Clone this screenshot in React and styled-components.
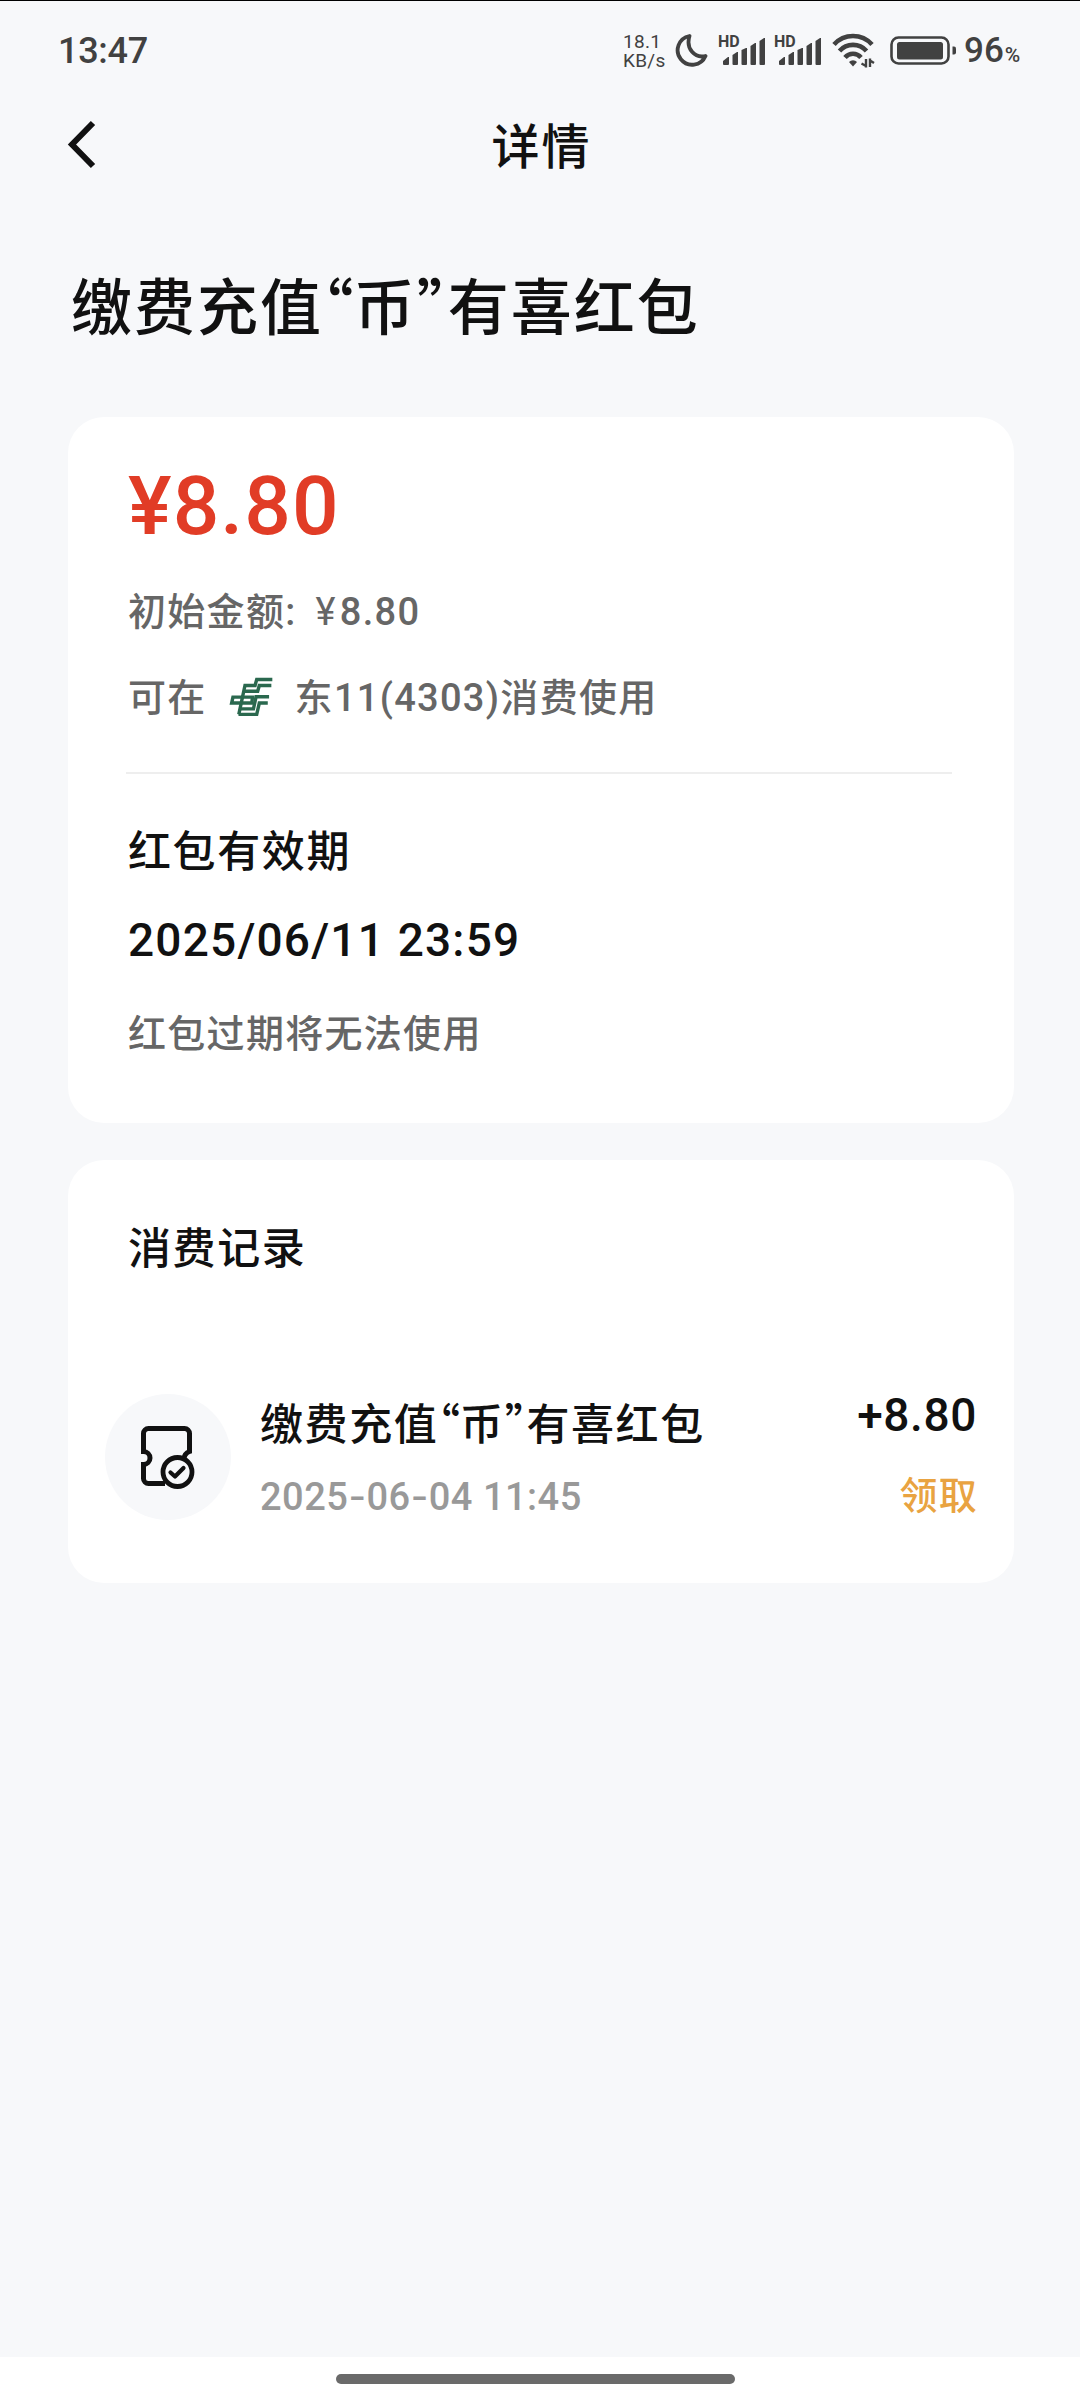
import styled, { createGlobalStyle } from "styled-components";

const GlobalStyle = createGlobalStyle`
    * {
        box-sizing: border-box;
    }
    body {
        margin: 0;
        background-color: #f7f8fa;
    }
`;

const Page = styled.div`
    display: flex;
    flex-direction: column;
    width: 1080px;
    height: 2400px;
    overflow: hidden;
    border-top: 1px solid #000;
    background-color: #f7f8fa;
    color: #111;
    font-family: Roboto, "Noto Sans CJK SC", sans-serif;
    font-weight: 500;
    white-space: nowrap;
`;

const StatusBar = styled.div`
    display: flex;
    align-items: center;
    justify-content: space-between;
    height: 100px;
    padding: 0 58px 0 58px;
    color: #414141;
`;

const Clock = styled.div`
    font-size: 36px;
    line-height: 40px;
    letter-spacing: -0.3px;
`;

const StatusIcons = styled.div`
    display: flex;
    align-items: center;
`;

const Speed = styled.div`
    display: flex;
    flex-direction: column;
    width: 51px;
    font-size: 19px;
    font-weight: 400;
    line-height: 19px;
    letter-spacing: 0.3px;
`;

const Percent = styled.div`
    display: flex;
    align-items: baseline;
    margin: 3px 0 0 7px;
    width: 58px;
    font-size: 35px;
    line-height: 40px;
`;

const Small = styled.span`
    margin-left: 1px;
    font-size: 21px;
`;

const NavBar = styled.div`
    display: grid;
    grid-template-columns: 100px 1fr 100px;
    align-items: center;
    height: 90px;
`;

const BackIcon = styled.svg`
    width: 32px;
    height: 50px;
    margin: -4px 0 0 66px;
`;

const NavTitle = styled.div`
    padding: 4px 0 0 3px;
    font-size: 48px;
    line-height: 60px;
    letter-spacing: 2px;
    text-align: center;
`;

const Heading = styled.h1`
    margin: 78px 0 0 71px;
    height: 78px;
    font-size: 61px;
    font-weight: 500;
    line-height: 80px;
    letter-spacing: 2px;
`;

const Quote = styled.span`
    display: inline-block;
    width: 0.505em;
    font-family: "Noto Sans CJK SC", sans-serif;
    font-feature-settings: "halt";
    line-height: 1;
    letter-spacing: 0;
`;

const Card = styled.div`
    width: 946px;
    margin: ${(props) => props.$top}px 0 0 68px;
    height: ${(props) => props.$height}px;
    border-radius: 36px;
    background-color: #fff;
`;

const Body = styled.div`
    display: flex;
    flex-direction: column;
    padding: 49px 62px 0 60px;
`;

const Amount = styled.div`
    color: #e13c26;
    font-size: 82px;
    line-height: 80px;
    letter-spacing: 1.1px;
`;

const Info = styled.div`
    display: flex;
    align-items: center;
    margin-top: ${(props) => props.$top}px;
    color: #666;
    font-size: 38px;
    line-height: 56px;
    letter-spacing: 1.3px;
`;

const Thin = styled.span`
    margin: 0 3px 0 19px;
    font-weight: 400;
`;

const BankLogo = styled.svg`
    width: 45px;
    height: 41px;
    margin: -3px 21px 0 22px;
`;

const Divider = styled.div`
    height: 2px;
    margin: 46px 0 50px -2px;
    background-color: #eeeeee;
`;

const Label = styled.div`
    font-size: 43px;
    line-height: 56px;
    letter-spacing: 1.6px;
`;

const Expire = styled.div`
    margin-top: 32px;
    font-size: 46px;
    line-height: 56px;
    letter-spacing: 1.2px;
`;

const RecordHead = styled(Label)`
    padding: 61px 0 0 60px;
`;

const Record = styled.div`
    display: flex;
    margin-top: 110px;
    padding: 0 37px 0 37px;
`;

const Badge = styled.div`
    display: flex;
    align-items: center;
    justify-content: center;
    width: 126px;
    height: 126px;
    margin-top: 7px;
    padding: 0 5px 2px 0;
    border-radius: 50%;
    background-color: #f7f8fa;
`;

const RecordText = styled.div`
    flex: 1;
    margin: 10px 0 0 29px;
`;

const RecordTime = styled.div`
    margin-top: 15px;
    color: #999;
    font-size: 38px;
    line-height: 56px;
    letter-spacing: 0.5px;
`;

const Dash = styled.span`
    font-family: Inter, sans-serif;
`;

const RecordSide = styled.div`
    text-align: right;
`;

const Change = styled.div`
    font-size: 46px;
    line-height: 56px;
    letter-spacing: 0.6px;
`;

const Tag = styled.div`
    margin: 25px -1px 0 0;
    color: #e9a341;
    font-size: 38px;
    line-height: 56px;
    letter-spacing: 1.2px;
`;

const HomeArea = styled.div`
    display: flex;
    justify-content: center;
    height: 43px;
    margin-top: auto;
    padding: 17px 9px 0 0;
    background-color: #fff;
`;

const HomeBar = styled.div`
    width: 399px;
    height: 10px;
    border-radius: 5px;
    background-color: #6a6a6a;
`;

const SignalBox = styled.div`
    display: flex;
    align-items: flex-start;
    width: 56px;
    height: 30px;
`;

const Hd = styled.span`
    width: 0;
    font-size: 16px;
    font-weight: 700;
    line-height: 12px;
    letter-spacing: 0;
`;

function Signal() {
    return (
        <SignalBox>
            <Hd>HD</Hd>
            <svg width="48" height="30" viewBox="0 0 48 30" fill="#414141">
                <path d="M5 28v-3l5-4h1v7a1 1 0 0 1-1 1H6a1 1 0 0 1-1-1z" />
                <path d="M14.500 19l4.500-3h1v12a1 1 0 0 1-1 1h-3.500a1 1 0 0 1-1-1z" />
                <path d="M23.500 14l4.500-2h1v16a1 1 0 0 1-1 1h-3.500a1 1 0 0 1-1-1z" />
                <path d="M32.500 10l4.500-3h1v21a1 1 0 0 1-1 1h-3.500a1 1 0 0 1-1-1z" />
                <path d="M41.500 5l4.500-3h1v26a1 1 0 0 1-1 1h-3.500a1 1 0 0 1-1-1z" />
            </svg>
        </SignalBox>
    );
}

function Moon() {
    return (
        <svg width="44" height="36" viewBox="0 0 44 36" fill="none" stroke="#414141" strokeWidth="3.800" strokeLinejoin="round">
            <path d="M15.500 3A14.500 14.500 0 1 0 31.500 23C21 25.500 11.500 16 15.500 3z" />
        </svg>
    );
}

function Wifi() {
    return (
        <svg width="60" height="36" viewBox="0 0 60 36" fill="none" stroke="#414141" strokeWidth="4.600">
            <path d="M4 11.500a25.500 25.500 0 0 1 38 0" />
            <path d="M9.500 18a18 18 0 0 1 27 0" />
            <path d="M15 24.500a10.500 10.500 0 0 1 16 0" />
            <path d="M19 29a5.500 5.500 0 0 1 8 0L23 33.500z" fill="#414141" stroke="none" />
            <path d="M36 26v8.500M40 25.500v8.500M36 33l-4.500-2.500M40 27.500l4 2.500" strokeWidth="2.400" />
        </svg>
    );
}

function Battery() {
    return (
        <svg width="67" height="30" viewBox="0 0 67 30">
            <rect x="1.500" y="1.500" width="57" height="26" rx="7" fill="none" stroke="#414141" strokeWidth="2.600" />
            <rect x="7" y="6" width="46" height="17.500" rx="2.500" fill="#414141" />
            <path d="M62.500 10.500h1.500a2 2 0 0 1 2 2v4a2 2 0 0 1-2 2h-1.500z" fill="#414141" />
        </svg>
    );
}

function Coupon() {
    return (
        <svg width="60" height="68" viewBox="0 0 60 68" fill="none" stroke="#111" strokeWidth="5">
            <path d="M29 61.500H12.500a5 5 0 0 1-5-5V42.500a6.500 6.500 0 0 0 0-13V11.500a5 5 0 0 1 5-5h36a5 5 0 0 1 5 5v18q-5 2-5.500 7" />
            <circle cx="41.500" cy="50" r="14.500" fill="#f7f8fa" strokeWidth="4.800" />
            <path d="M34.500 50.500l4.500 4 8.500-8.500" strokeWidth="4.200" strokeLinecap="round" strokeLinejoin="round" />
        </svg>
    );
}

function App() {
    return (
        <Page>
            <GlobalStyle />
            <StatusBar>
                <Clock>13:47</Clock>
                <StatusIcons>
                    <Speed>
                        <span>18.1</span>
                        <span>KB/s</span>
                    </Speed>
                    <Moon />
                    <Signal />
                    <Signal />
                    <Wifi />
                    <Battery />
                    <Percent>
                        96<Small>%</Small>
                    </Percent>
                </StatusIcons>
            </StatusBar>
            <NavBar>
                <BackIcon viewBox="0 0 32 50" fill="none" stroke="#111" strokeWidth="6">
                    <path d="M27 4L6 25.500 27 47" />
                </BackIcon>
                <NavTitle>详情</NavTitle>
            </NavBar>
            <Heading>
                缴费充值<Quote>“</Quote>币<Quote>”</Quote>有喜红包
            </Heading>
            <Card $top={70} $height={706}>
                <Body>
                    <Amount>¥8.80</Amount>
                    <Info $top={38}>
                        初始金额:<Thin>¥</Thin>8.80
                    </Info>
                    <Info $top={30}>
                        可在
                        <BankLogo viewBox="54 42 138 126" fill="none" stroke="#2a684e" strokeWidth="10.500">
                            <path d="M187 53H139L134 71H103L84 160" />
                            <path d="M184 71H147L142 89H98" />
                            <path d="M126 107H66L62 125H124z" />
                            <path d="M177 106H137L129 143H90" />
                            <path d="M173 125H147L139 160H83" />
                        </BankLogo>
                        东11(4303)消费使用
                    </Info>
                    <Divider />
                    <Label>红包有效期</Label>
                    <Expire>2025/06/11 23:59</Expire>
                    <Info $top={38}>红包过期将无法使用</Info>
                </Body>
            </Card>
            <Card $top={37} $height={423}>
                <RecordHead>消费记录</RecordHead>
                <Record>
                    <Badge>
                        <Coupon />
                    </Badge>
                    <RecordText>
                        <Label>
                            缴费充值<Quote>“</Quote>币<Quote>”</Quote>有喜红包
                        </Label>
                        <RecordTime>
                            2025<Dash>-</Dash>06<Dash>-</Dash>04 11:45
                        </RecordTime>
                    </RecordText>
                    <RecordSide>
                        <Change>+8.80</Change>
                        <Tag>领取</Tag>
                    </RecordSide>
                </Record>
            </Card>
            <HomeArea>
                <HomeBar />
            </HomeArea>
        </Page>
    );
}
export default App;
